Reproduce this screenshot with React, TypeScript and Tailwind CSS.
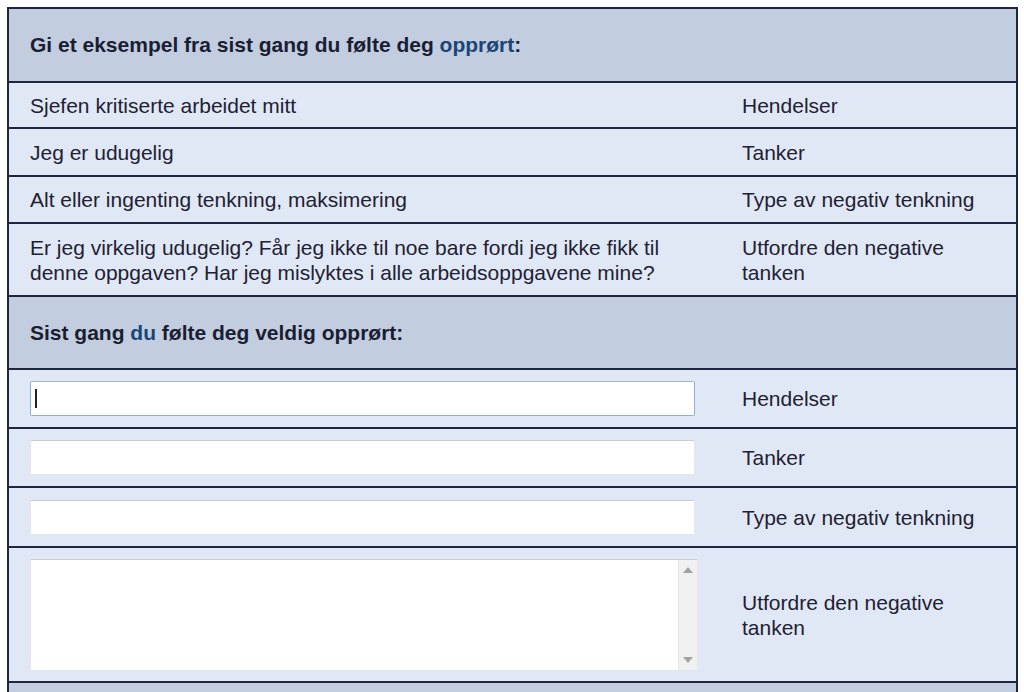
import React from 'react';

const Header = ({ children, h }: { children: React.ReactNode; h: string }) => (
  <div className={`flex items-center bg-[#c3cde0] border-b-2 border-[#1f2740] pl-[21px] ${h}`}>
    <div className="text-[21px] font-bold text-[#1a1e33]">{children}</div>
  </div>
);

const Row = ({ left, right, h }: { left: React.ReactNode; right: string; h: string }) => (
  <div className={`flex items-center bg-[#e1e8f5] border-b-2 border-[#1f2740] ${h}`}>
    <div className="w-[733px] pl-[21px] pr-8 text-[21px] leading-[25px] text-[#1e2133]">{left}</div>
    <div className="flex-1 pr-6 text-[21px] leading-[25px] text-[#1e2133]">{right}</div>
  </div>
);

const Field = ({ focused }: { focused?: boolean }) => (
  <div className="relative w-[665px]">
    <input
      className={`w-full h-[35px] bg-white outline-none px-1 rounded-[2px] border ${
        focused ? 'border-[#8fb0d4] border-t-[#9fb4cc]' : 'border-[#e3e6ea] border-t-[#c9ccd1]'
      }`}
    />
    {focused && <span className="absolute left-[5px] top-[8px] w-[2px] h-[19px] bg-[#222]" />}
  </div>
);

export default function App() {
  return (
    <div className="w-full h-[692px] bg-white overflow-hidden pt-[7px] pl-[7px] font-['Liberation_Sans',Arial,sans-serif]">
      <div className="w-[1011px] border-2 border-b-0 border-[#1f2740]">
        <Header h="h-[74px]">
          Gi et eksempel fra sist gang du følte deg <span className="text-[#1b4674]">opprørt</span>:
        </Header>
        <Row h="h-[46px]" left="Sjefen kritiserte arbeidet mitt" right="Hendelser" />
        <Row h="h-[48px]" left="Jeg er udugelig" right="Tanker" />
        <Row h="h-[47px]" left="Alt eller ingenting tenkning, maksimering" right="Type av negativ tenkning" />
        <Row
          h="h-[73px]"
          left="Er jeg virkelig udugelig? Får jeg ikke til noe bare fordi jeg ikke fikk til denne oppgaven? Har jeg mislyktes i alle arbeidsoppgavene mine?"
          right="Utfordre den negative tanken"
        />
        <Header h="h-[73px]">
          Sist gang <span className="text-[#1b4674]">du</span> følte deg veldig opprørt:
        </Header>
        <Row h="h-[59px]" left={<Field focused />} right="Hendelser" />
        <Row h="h-[59px]" left={<Field />} right="Tanker" />
        <Row h="h-[60px]" left={<Field />} right="Type av negativ tenkning" />
        <Row
          h="h-[135px]"
          left={
            <div className="flex w-[668px] h-[112px] border border-[#e3e6ea] border-t-[#c9ccd1] rounded-[2px] bg-white">
              <textarea className="flex-1 resize-none outline-none bg-white" />
              <div className="w-[19px] flex flex-col items-center justify-between py-[7px] bg-[#f1f1f1] border-l border-[#e6e6e6]">
                <svg width="10" height="6" viewBox="0 0 10 6"><path d="M0 6 L5 0 L10 6 Z" fill="#a3a3a3" /></svg>
                <svg width="10" height="6" viewBox="0 0 10 6"><path d="M0 0 L5 6 L10 0 Z" fill="#a3a3a3" /></svg>
              </div>
            </div>
          }
          right="Utfordre den negative tanken"
        />
        <div className="h-[40px] bg-[#c3cde0]" />
      </div>
    </div>
  );
}
